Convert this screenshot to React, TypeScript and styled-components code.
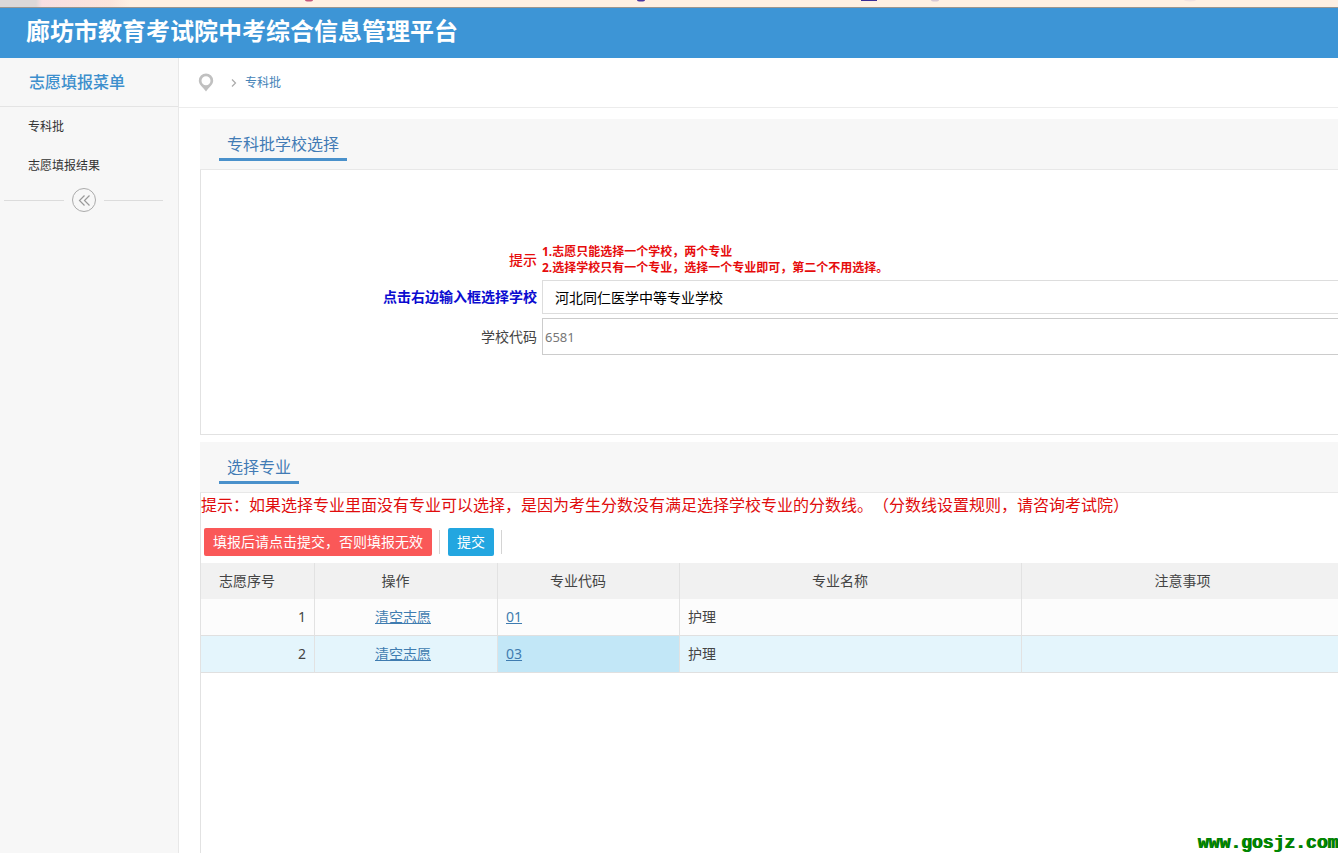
import React from 'react';
import styled, { createGlobalStyle } from 'styled-components';

const GlobalStyle = createGlobalStyle`
  * { box-sizing: border-box; }
  body {
    margin: 0;
    background: #fff;
    color: #444;
    font: 14px/20px "Noto Sans", "Noto Sans CJK SC", sans-serif;
    text-spacing-trim: space-all;
  }
  a { color: #3f7cb0; }
  button, input { font-family: inherit; }
`;

const Page = styled.div`
  position: relative;
  display: flex;
  flex-direction: column;
  min-height: 100vh;
  overflow: hidden;
`;

const Banner = styled.div`
  display: flex;
  height: 8px;
  border-bottom: 1px solid #9b9690;
  background: linear-gradient(90deg, #dcd8d8 0, #dcd8d8 36px, #f8dfe2 42px, #fbe5dc 110px, #fef0e3 130px);
`;

const BannerArt = styled.svg`
  width: 100%;
  height: 7px;
`;

const TopBar = styled.header`
  height: 50px;
  padding-left: 26px;
  background: #3d95d6;
`;

const Title = styled.h1`
  margin: 0;
  color: #fff;
  font-size: 24px;
  line-height: 46px;
  font-weight: 700;
`;

const Body = styled.div`
  display: flex;
  flex: 1;
`;

const Sidebar = styled.nav`
  flex: 0 0 179px;
  background: #f7f7f7;
  border-right: 1px solid #e8e8e8;
`;

const MenuTitle = styled.h2`
  margin: 0;
  padding-left: 29px;
  border-bottom: 1px solid #e4e4e4;
  color: #3d8fcd;
  font-size: 16px;
  line-height: 48px;
  font-weight: 500;
`;

const MenuLink = styled.a`
  display: block;
  padding-left: 28px;
  color: #333;
  font-size: 12px;
  line-height: 39px;
  text-decoration: none;
`;

const Collapse = styled.div`
  display: flex;
  align-items: center;
  gap: 8px;
  margin: 3px 15px 0 4px;
`;

const Rule = styled.span`
  flex: 1;
  height: 1px;
  background: #dcdcdc;
`;

const CollapseButton = styled.button`
  width: 24px;
  height: 24px;
  padding: 0;
  border: 0;
  background: none;

  svg { display: block; }
`;

const Main = styled.main`
  display: flex;
  flex: 1;
  flex-direction: column;
  min-width: 0;
`;

const Breadcrumb = styled.div`
  display: flex;
  align-items: center;
  height: 50px;
  padding-left: 19px;
  border-bottom: 1px solid #ececec;
  font-size: 12px;

  a { color: #4684b8; text-decoration: none; }
  .pin { margin-right: 17px; }
  .arrow { margin-right: 8px; }
`;

const Panel = styled.section<{ $grow?: boolean }>`
  flex: ${(p) => (p.$grow ? '1' : 'none')};
  margin: ${(p) => (p.$grow ? '7px' : '11px')} -27px 0 21px;
`;

const PanelHead = styled.div`
  display: flex;
  align-items: flex-end;
  height: 51px;
  padding: 0 18px 8px 19px;
  border-bottom: 1px solid #e8e8e8;
  background: #f7f7f7;
`;

const Tab = styled.h3`
  margin: 0;
  padding: 0 8px;
  border-bottom: 3px solid #4a91cb;
  color: #427bb5;
  font-size: 16px;
  line-height: 28px;
  font-weight: 400;
`;

const Form = styled.form`
  display: grid;
  grid-template-columns: 336px 1fr;
  column-gap: 5px;
  row-gap: 4px;
  align-items: center;
  padding: 74px 0 79px;
  border: 1px solid #e2e2e2;
  border-top: 0;
`;

const Label = styled.label<{ $tone?: string }>`
  color: ${(p) => p.$tone || '#444'};
  font-weight: ${(p) => (p.$tone ? 700 : 400)};
  text-align: right;
`;

const TipLabel = styled.span`
  color: #e60c0c;
  font-weight: 500;
  text-align: right;
`;

const Tips = styled.div`
  color: #e60c0c;
  font-size: 12px;
  line-height: 16px;
  font-weight: 700;
`;

const SchoolInput = styled.input`
  width: 100%;
  height: 34px;
  padding: 0 12px;
  border: 1px solid #ddd;
  color: #000;
  font-size: 14px;
`;

const CodeInput = styled.input`
  width: 100%;
  height: 37px;
  padding: 0 2px;
  border: 1px solid #ccc;
  color: #777;
  font-size: 13px;
`;

const GridArea = styled.div`
  height: calc(100% - 51px);
  border-left: 1px solid #e2e2e2;
`;

const Notice = styled.p`
  margin: 0;
  color: #e00c0c;
  font-size: 16px;
  line-height: 24px;
`;

const Toolbar = styled.div`
  display: flex;
  align-items: center;
  padding: 11px 3px 7px;
`;

const ActionButton = styled.button<{ $color: string }>`
  height: 28px;
  padding: 0 9px;
  border: 0;
  border-radius: 2px;
  background: ${(p) => p.$color};
  color: #fff;
  font-size: 14px;
  line-height: 28px;
`;

const Separator = styled.span`
  width: 1px;
  height: 24px;
  margin: 0 8px 0 7px;
  background: #d4d4d4;
`;

const Table = styled.table`
  width: 100%;
  table-layout: fixed;
  border-collapse: separate;
  border-spacing: 0;

  th, td { border-right: 1px solid #e2e2e2; }
`;

const HeadCell = styled.th<{ $width?: number }>`
  width: ${(p) => (p.$width ? `${p.$width}px` : 'auto')};
  height: 36px;
  padding: 0 21px 0 0;
  background: #f1f1f1;
  font-weight: 400;
`;

const Row = styled.tr<{ $selected?: boolean }>`
  background: ${(p) => (p.$selected ? '#e4f5fc' : '#fcfcfc')};
`;

const Cell = styled.td<{ $align?: string; $active?: boolean }>`
  height: 37px;
  padding: 0 ${(p) => (p.$align === 'center' ? '14px' : '8px')} 0 8px;
  border-bottom: 1px solid #e0e0e0;
  background: ${(p) => (p.$active ? '#c2e7f7' : 'transparent')};
  text-align: ${(p) => p.$align || 'left'};
`;

const Watermark = styled.div`
  position: absolute;
  right: 0;
  bottom: 0;
  color: #008a00;
  font: 700 18px/20px "Liberation Mono", monospace;
  text-shadow: 1px 0 0 #046004;
`;

const columns = [
  { name: '志愿序号', width: 114 },
  { name: '操作', width: 183 },
  { name: '专业代码', width: 182 },
  { name: '专业名称', width: 342 },
  { name: '注意事项' },
];

const choices = [
  { order: 1, code: '01', major: '护理', selected: false },
  { order: 2, code: '03', major: '护理', selected: true },
];

export default function App() {
  return (
    <Page>
      <GlobalStyle />
      <Banner>
        <BannerArt aria-hidden="true">
          <ellipse cx="309" cy="0" rx="4" ry="1.500" fill="#c4587c" />
          <ellipse cx="641" cy="0" rx="4" ry="1.500" fill="#4a35a0" />
          <rect x="861" y="0" width="16" height="1" fill="#3b2c94" />
          <ellipse cx="935" cy="0" rx="4" ry="1.500" fill="#d8c8d4" />
          <ellipse cx="1190" cy="0" rx="6" ry="1.500" fill="#f3e3e0" />
        </BannerArt>
      </Banner>
      <TopBar>
        <Title>廊坊市教育考试院中考综合信息管理平台</Title>
      </TopBar>
      <Body>
        <Sidebar>
          <MenuTitle>志愿填报菜单</MenuTitle>
          <MenuLink href="#batch">专科批</MenuLink>
          <MenuLink href="#result">志愿填报结果</MenuLink>
          <Collapse>
            <Rule />
            <CollapseButton type="button" aria-label="收起菜单">
              <svg width="24" height="24" viewBox="0 0 24 24" fill="none" stroke="#aaa">
                <circle cx="12" cy="12" r="11.5" />
                <path d="M12.5 7.5 7.5 12.5l5 5M17.5 7.5l-5 5 5 5" stroke="#999" strokeWidth="1.2" />
              </svg>
            </CollapseButton>
            <Rule />
          </Collapse>
        </Sidebar>
        <Main>
          <Breadcrumb>
            <svg className="pin" width="16" height="20" viewBox="0 0 16 20" aria-hidden="true">
              <path
                fill="#c0c0c0"
                fillRule="evenodd"
                d="M8 .5a7.200 7.200 0 0 0-7.200 7.200c0 3.800 4.200 6.300 7.200 10.800 3-4.500 7.200-7 7.200-10.800A7.200 7.200 0 0 0 8 .5Zm0 2.700a4.500 4.500 0 1 1 0 9 4.500 4.500 0 0 1 0-9Z"
              />
            </svg>
            <svg className="arrow" width="6" height="8" viewBox="0 0 6 8" fill="none" stroke="#aaa" strokeWidth="1.200" aria-hidden="true">
              <path d="m1 .5 3.500 3.500L1 7.500" />
            </svg>
            <a href="#batch">专科批</a>
          </Breadcrumb>
          <Panel>
            <PanelHead>
              <Tab>专科批学校选择</Tab>
            </PanelHead>
            <Form>
              <TipLabel>提示</TipLabel>
              <Tips>
                1.志愿只能选择一个学校，两个专业
                <br />
                2.选择学校只有一个专业，选择一个专业即可，第二个不用选择。
              </Tips>
              <Label htmlFor="school" $tone="#0b0bd0">点击右边输入框选择学校</Label>
              <SchoolInput id="school" defaultValue="河北同仁医学中等专业学校" />
              <Label htmlFor="code">学校代码</Label>
              <CodeInput id="code" defaultValue="6581" />
            </Form>
          </Panel>
          <Panel $grow>
            <PanelHead>
              <Tab>选择专业</Tab>
            </PanelHead>
            <GridArea>
              <Notice>提示：如果选择专业里面没有专业可以选择，是因为考生分数没有满足选择学校专业的分数线。（分数线设置规则，请咨询考试院）</Notice>
              <Toolbar>
                <ActionButton type="button" $color="#fa5858">填报后请点击提交，否则填报无效</ActionButton>
                <Separator />
                <ActionButton type="button" $color="#23a6e0">提交</ActionButton>
                <Separator />
              </Toolbar>
              <Table>
                <thead>
                  <tr>
                    {columns.map((c) => (
                      <HeadCell key={c.name} $width={c.width}>{c.name}</HeadCell>
                    ))}
                  </tr>
                </thead>
                <tbody>
                  {choices.map((c) => (
                    <Row key={c.order} $selected={c.selected}>
                      <Cell $align="right">{c.order}</Cell>
                      <Cell $align="center"><a href="#clear">清空志愿</a></Cell>
                      <Cell $active={c.selected}><a href="#major">{c.code}</a></Cell>
                      <Cell>{c.major}</Cell>
                      <Cell />
                    </Row>
                  ))}
                </tbody>
              </Table>
            </GridArea>
          </Panel>
        </Main>
      </Body>
      <Watermark>www.gosjz.com</Watermark>
    </Page>
  );
}
